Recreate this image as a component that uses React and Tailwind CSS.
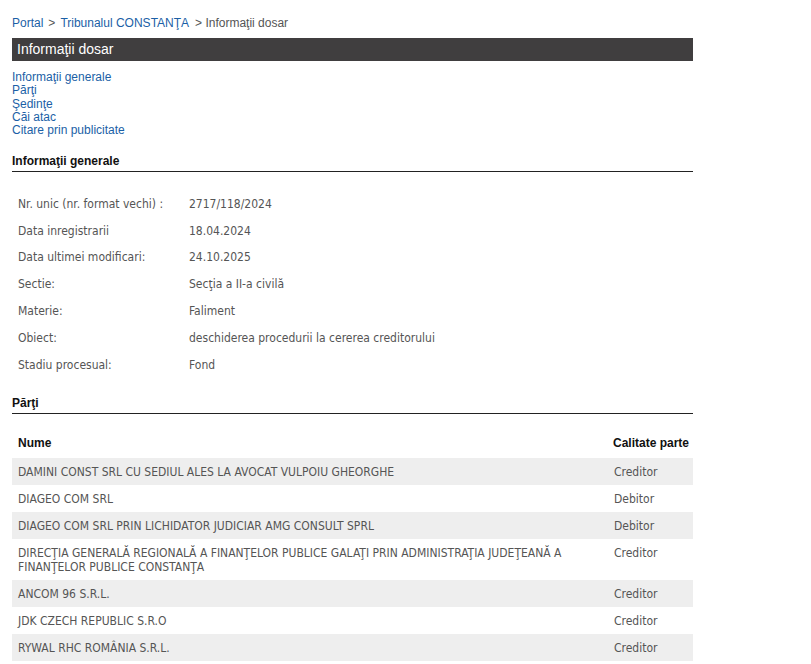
import React from 'react';

const info = [
  ['Nr. unic (nr. format vechi) :', '2717/118/2024'],
  ['Data inregistrarii', '18.04.2024'],
  ['Data ultimei modificari:', '24.10.2025'],
  ['Sectie:', 'Secţia a II-a civilă'],
  ['Materie:', 'Faliment'],
  ['Obiect:', 'deschiderea procedurii la cererea creditorului'],
  ['Stadiu procesual:', 'Fond'],
];

const parti = [
  ['DAMINI CONST SRL CU SEDIUL ALES LA AVOCAT VULPOIU GHEORGHE', 'Creditor'],
  ['DIAGEO COM SRL', 'Debitor'],
  ['DIAGEO COM SRL PRIN LICHIDATOR JUDICIAR AMG CONSULT SPRL', 'Debitor'],
  ['DIRECŢIA GENERALĂ REGIONALĂ A FINANŢELOR PUBLICE GALAŢI PRIN ADMINISTRAŢIA JUDEŢEANĂ A FINANŢELOR PUBLICE CONSTANŢA', 'Creditor'],
  ['ANCOM 96 S.R.L.', 'Creditor'],
  ['JDK CZECH REPUBLIC S.R.O', 'Creditor'],
  ['RYWAL RHC ROMÂNIA S.R.L.', 'Creditor'],
];

const links = ['Informaţii generale', 'Părţi', 'Şedinţe', 'Căi atac', 'Citare prin publicitate'];

function SectionTitle({ children }) {
  return (
    <div className="border-b border-[#222] text-[12px] font-bold text-[#111] leading-[14px] pb-[3px]">
      {children}
    </div>
  );
}

export default function App() {
  return (
    <div className="bg-white min-h-[664px] font-['Liberation_Sans',Arial,sans-serif]">
      <div className="w-[681px] ml-[12px] pt-[16px]">
        {/* Breadcrumb */}
        <div className="text-[12px] leading-[14px] text-[#555] flex gap-[5px]">
          <a className="text-[#1b5fa6]">Portal</a>
          <span>&gt;</span>
          <a className="text-[#1b5fa6] mr-[1px]">Tribunalul CONSTANŢA</a>
          <span>&gt; Informaţii dosar</span>
        </div>

        {/* Header bar */}
        <div className="mt-[8px] h-[23px] bg-[#403e3f] text-white text-[14px] leading-[23px] pl-[5px]">
          Informaţii dosar
        </div>

        {/* Anchor links */}
        <div className="mt-[10px] flex flex-col text-[12px] leading-[13.3px] text-[#1b5fa6]">
          {links.map(l => (
            <a key={l}>{l}</a>
          ))}
        </div>

        {/* Informatii generale */}
        <div className="mt-[17px]">
          <SectionTitle>Informaţii generale</SectionTitle>
        </div>
        <div className="mt-[18px] font-['DejaVu_Sans_Condensed',Tahoma,sans-serif] text-[12px] text-[#555]">
          {info.map(([k, v]) => (
            <div key={k} className="flex h-[26.8px] items-center">
              <div className="w-[177px] pl-[6px]">{k}</div>
              <div>{v}</div>
            </div>
          ))}
        </div>

        {/* Parti */}
        <div className="mt-[18px]">
          <SectionTitle>Părţi</SectionTitle>
        </div>
        <div className="mt-[14px] text-[12px]">
          <div className="flex h-[30px] items-center font-bold text-[#111]">
            <div className="flex-1 pl-[6px]">Nume</div>
            <div className="w-[80px]">Calitate parte</div>
          </div>
          <div className="font-['DejaVu_Sans_Condensed',Tahoma,sans-serif] text-[#555]">
            {parti.map(([n, c], i) => (
              <div key={n} className={`flex py-[6.5px] leading-[14px] ${i % 2 === 0 ? 'bg-[#eeeeee]' : 'bg-white'}`}>
                <div className="flex-1 pl-[6px] pr-[20px]">{n}</div>
                <div className="w-[79px]">{c}</div>
              </div>
            ))}
          </div>
        </div>
      </div>
    </div>
  );
}
